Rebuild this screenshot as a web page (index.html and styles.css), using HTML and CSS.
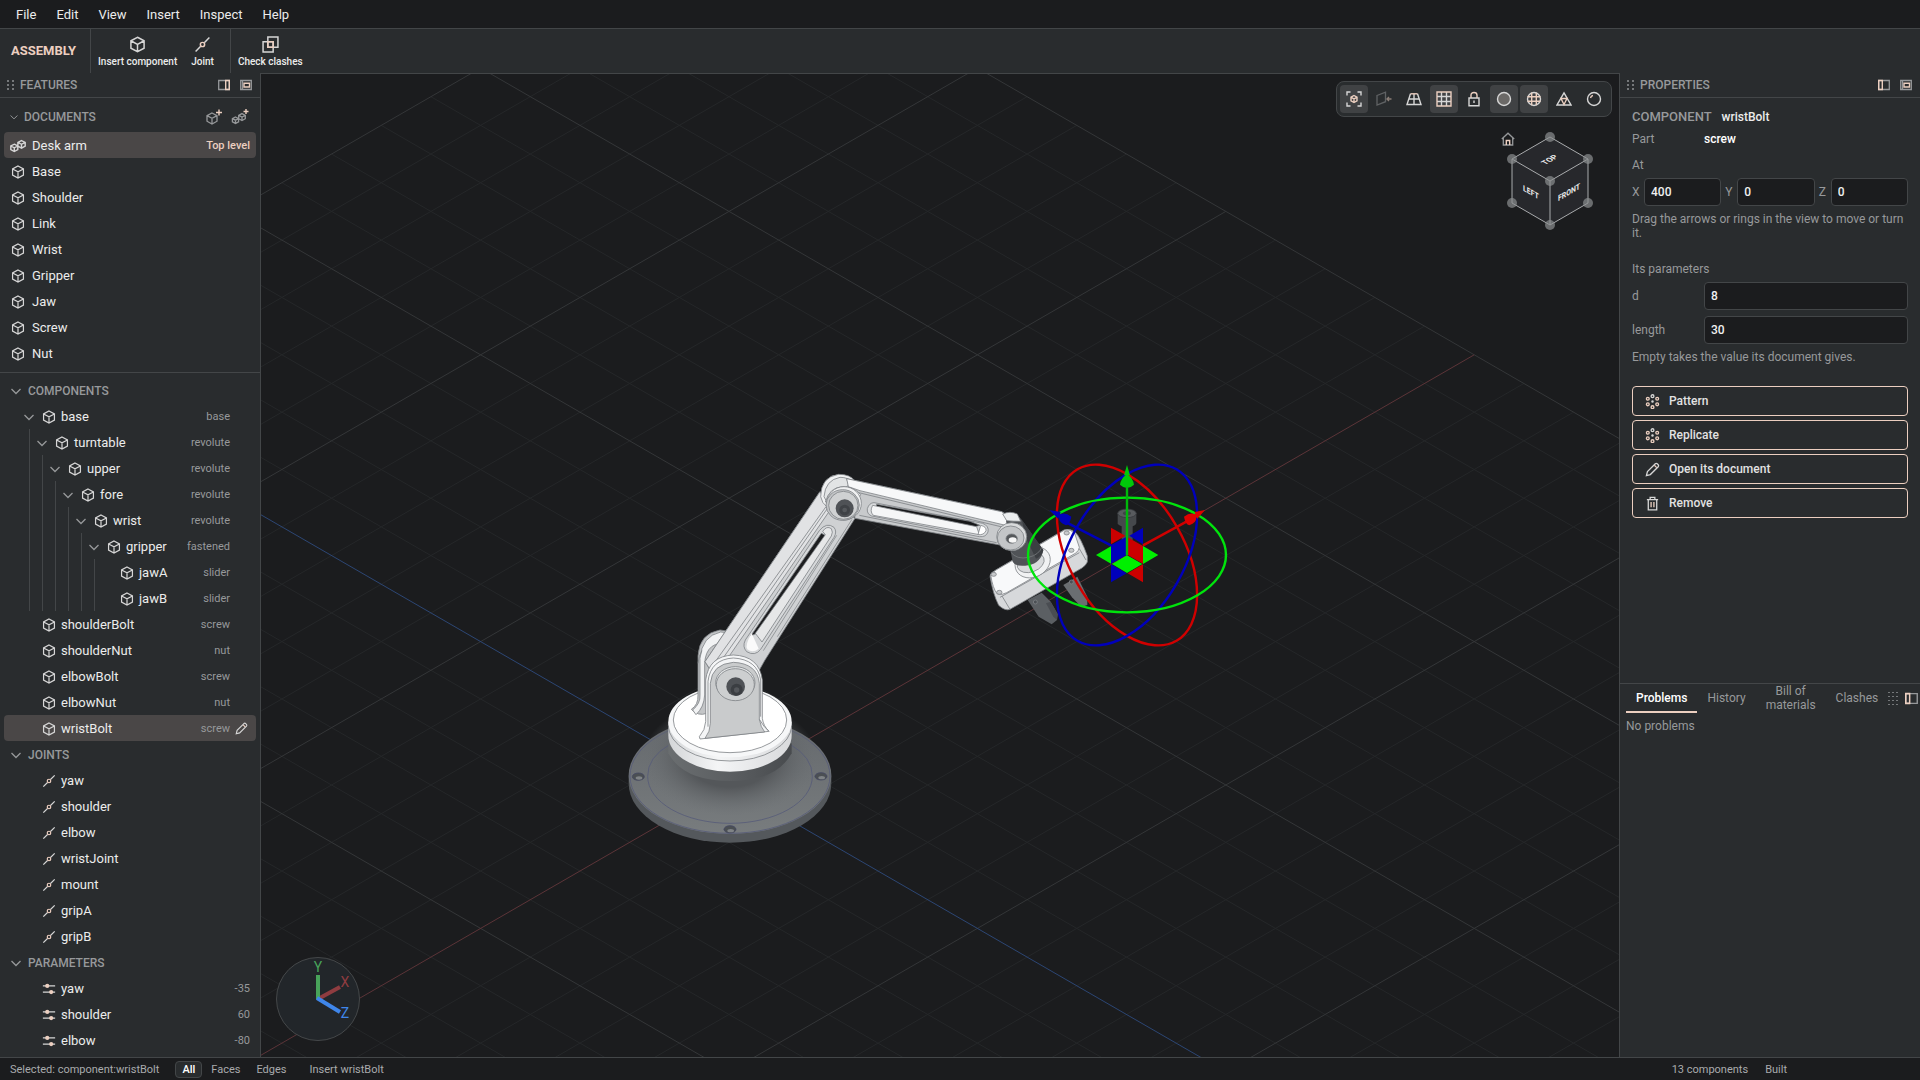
FILE: index.html
```html
<!DOCTYPE html>
<html lang="en">
<head>
<meta charset="utf-8">
<title>Desk arm – Assembly</title>
<link rel="stylesheet" href="styles.css">
</head>
<body>
<svg class="defs" aria-hidden="true">
  <symbol id="cube" viewBox="0 0 16 16"><path class="w" d="M8 1.2 14.2 4.5V11.5L8 14.8 1.8 11.5V4.5ZM1.8 4.5 8 7.8 14.2 4.5M8 7.8V14.8"/></symbol>
  <symbol id="cubes" viewBox="0 0 16 16"><path class="w" d="M4.3 6.2 7.8 8V11.6L4.3 13.5.8 11.6V8ZM.8 8 4.3 9.8 7.8 8M4.3 9.8V13.5M11.5 2.6 15.2 4.4V8.2L11.5 10.2 7.9 8.2V4.4ZM7.9 4.4 11.5 6.3 15.2 4.4M11.5 6.3V10.2"/></symbol>
  <symbol id="cube-add" viewBox="0 0 18 18"><path class="g" d="M7 5 12 7.6V13.2L7 16 2 13.2V7.6ZM2 7.6 7 10.3 12 7.6M7 10.3V16"/><path class="p" d="M14 1.5V7.5M11 4.5H17"/></symbol>
  <symbol id="cubes-add" viewBox="0 0 18 18"><path class="g" d="M4.5 9 7.6 10.6V13.8L4.5 15.4 1.4 13.8V10.6ZM1.4 10.6 4.5 12.2 7.6 10.6M4.5 12.2V15.4M11 5.6 14.3 7.3V10.7L11 12.5 7.7 10.7V7.3ZM7.7 7.3 11 9 14.3 7.3M11 9V12.5"/><path class="p" d="M15 1V6M12.500 3.500H17.500"/></symbol>
  <symbol id="joint" viewBox="0 0 16 16"><path class="w" d="M1.5 14.500 6.300 9.700M9.700 6.300 14.500 1.500"/><circle class="p" cx="8" cy="8" r="2"/></symbol>
  <symbol id="clash" viewBox="0 0 16 16"><path class="w" d="M5.500 1H15V10.500H5.500ZM1 5.500H10.500V15H1Z"/><path class="p" d="M5.500 5.500H10.500V10.500H5.500Z"/></symbol>
  <symbol id="chevron" viewBox="0 0 16 16"><path class="g" d="M3.500 6 8 10.500 12.500 6"/></symbol>
  <symbol id="grip" viewBox="0 0 8 12"><path class="dots" d="M0 1H2V3H0ZM5 1H7V3H5ZM0 5H2V7H0ZM5 5H7V7H5ZM0 9H2V11H0ZM5 9H7V11H5Z"/></symbol>
  <symbol id="grip-wide" viewBox="0 0 10 14"><path class="dots" d="M0 0H2V1H0ZM4 0H6V1H4ZM8 0H10V1H8ZM0 4H2V5H0ZM4 4H6V5H4ZM8 4H10V5H8ZM0 8H2V9H0ZM4 8H6V9H4ZM8 8H10V9H8ZM0 12H2V13H0ZM4 12H6V13H4ZM8 12H10V13H8Z"/></symbol>
  <symbol id="dock-right" viewBox="0 0 12 12"><path class="g" d="M.7 1.500H11.300V10.500H.7Z"/><path class="p" d="M7.700 1.500H11.300V10.500H7.700Z"/></symbol>
  <symbol id="dock-left" viewBox="0 0 12 12"><path class="g" d="M.7 1.500H11.300V10.500H.7Z"/><path class="p" d="M.7 1.500H4.300V10.500H.7Z"/></symbol>
  <symbol id="float" viewBox="0 0 12 12"><path class="g" d="M.7 1.500H11.300V10.500H.7ZM2.500 2V10"/><path class="p" d="M4 4.200H9.500V8H4Z"/></symbol>
  <symbol id="pencil" viewBox="0 0 16 16"><path class="w" d="M1.500 14.500 2.600 10.300 11 1.900Q12 1 13 1.900L14.100 3Q15 4 14.100 5L5.700 13.400Z"/><path class="p" d="M10 3.500 12.500 6"/></symbol>
  <symbol id="sliders" viewBox="0 0 16 16"><path class="w" d="M1 4.500H15M1 11.500H15"/><circle class="pf" cx="6" cy="4.500" r="2.400"/><circle class="pf" cx="10.500" cy="11.500" r="2.400"/></symbol>
  <symbol id="pattern" viewBox="0 0 16 16"><g class="p"><circle cx="3" cy="5" r="1.500"/><circle cx="13" cy="5" r="1.500"/><circle cx="3" cy="11" r="1.500"/><circle cx="13" cy="11" r="1.500"/><circle cx="8" cy="14" r="1.500"/></g><circle class="w" cx="8" cy="2.300" r="1.500"/><circle class="wf" cx="8" cy="8" r="1.300"/></symbol>
  <symbol id="trash" viewBox="0 0 16 16"><path class="w" d="M2 3.800H14M5.500 3.500V1.500H10.500V3.500M3.500 4V14.800H12.500V4"/><path class="p" d="M6.500 6.500V12M9.500 6.500V12"/></symbol>
  <symbol id="fit" viewBox="0 0 16 16"><path class="w" d="M1 4.500V1H4.500M11.500 1H15V4.500M15 11.500V15H11.500M4.500 15H1V11.500"/><path class="p" d="M8 4.500 11 6.200V9.800L8 11.500 5 9.800V6.200ZM5 6.200 8 8 11 6.200M8 8V11.500"/></symbol>
  <symbol id="section" viewBox="0 0 16 16"><path class="g" d="M1 4.500 9.500 1.200V10.700L1 14Z"/><path class="p" d="M15.500 8H11M13 6 11 8 13 10"/></symbol>
  <symbol id="perspective" viewBox="0 0 16 16"><path class="w" d="M4.500 2.800 1 13.500H15L11.500 2.800M8 3V13.500M3 8H13"/><path class="p" d="M4.500 2.800H11.500"/></symbol>
  <symbol id="grid" viewBox="0 0 16 16"><path class="w" d="M5.500 1V15M10.500 1V15M1 5.500H15M1 10.500H15"/><path class="p" d="M1 1H15V15H1Z"/></symbol>
  <symbol id="lock" viewBox="0 0 16 16"><path class="w" d="M3 7H13V14.800H3ZM8 9.500V12"/><path class="p" d="M5 7V4.200Q5 1.500 8 1.500T11 4.200V7"/></symbol>
  <symbol id="shaded" viewBox="0 0 16 16"><circle class="w shade" cx="8" cy="8" r="6.500"/></symbol>
  <symbol id="wire" viewBox="0 0 16 16"><circle class="w" cx="8" cy="8" r="6.500"/><path class="p" d="M1.500 5.700H14.500M1.500 10.300H14.500M5.700 1.800V14.200M10.300 1.800V14.200"/></symbol>
  <symbol id="mesh" viewBox="0 0 16 16"><path class="w" d="M8 1.800 15 14H1Z"/><path class="p" d="M5 7.500H11L8 13.500Z"/></symbol>
  <symbol id="ball" viewBox="0 0 16 16"><circle class="w" cx="8" cy="8" r="6.500"/><path class="p" d="M4.500 7Q5 4.800 7 4.500"/></symbol>
  <symbol id="home" viewBox="0 0 14 14"><path class="g" d="M.8 7 7 1.200 13.200 7M2.300 6V13H11.700V6"/><path class="p" d="M5.300 13V8.500H8.700V13"/></symbol>
</svg>

<nav class="menubar" aria-label="Main menu">
  <button>File</button><button>Edit</button><button>View</button><button>Insert</button><button>Inspect</button><button>Help</button>
</nav>

<header class="ribbon">
  <strong class="ribbon-mode">ASSEMBLY</strong>
  <div class="ribbon-group">
    <button><svg><use href="#cube"/></svg>Insert component</button>
    <button><svg><use href="#joint"/></svg>Joint</button>
  </div>
  <div class="ribbon-group">
    <button><svg><use href="#clash"/></svg>Check clashes</button>
  </div>
</header>

<main class="workspace">
  <aside class="features">
    <header class="panel-head">
      <svg class="grip"><use href="#grip"/></svg><h2>FEATURES</h2>
      <button aria-label="Dock right"><svg><use href="#dock-right"/></svg></button>
      <button aria-label="Float"><svg><use href="#float"/></svg></button>
    </header>
    <section class="documents">
      <header class="docs-head">
        <svg class="chev"><use href="#chevron"/></svg><h3>DOCUMENTS</h3>
        <button aria-label="New part"><svg><use href="#cube-add"/></svg></button>
        <button aria-label="New assembly"><svg><use href="#cubes-add"/></svg></button>
      </header>
      <ul>
        <li class="row selected"><svg class="wide"><use href="#cubes"/></svg><span>Desk arm</span><em>Top level</em></li>
        <li class="row"><svg><use href="#cube"/></svg><span>Base</span></li>
        <li class="row"><svg><use href="#cube"/></svg><span>Shoulder</span></li>
        <li class="row"><svg><use href="#cube"/></svg><span>Link</span></li>
        <li class="row"><svg><use href="#cube"/></svg><span>Wrist</span></li>
        <li class="row"><svg><use href="#cube"/></svg><span>Gripper</span></li>
        <li class="row"><svg><use href="#cube"/></svg><span>Jaw</span></li>
        <li class="row"><svg><use href="#cube"/></svg><span>Screw</span></li>
        <li class="row"><svg><use href="#cube"/></svg><span>Nut</span></li>
      </ul>
    </section>
    <section class="outline">
      <h3><svg class="chev"><use href="#chevron"/></svg>COMPONENTS</h3>
      <ul class="tree">
        <li><div class="row"><svg class="chev"><use href="#chevron"/></svg><svg><use href="#cube"/></svg><span>base</span><small>base</small></div>
          <ul><li><div class="row"><svg class="chev"><use href="#chevron"/></svg><svg><use href="#cube"/></svg><span>turntable</span><small>revolute</small></div>
            <ul><li><div class="row"><svg class="chev"><use href="#chevron"/></svg><svg><use href="#cube"/></svg><span>upper</span><small>revolute</small></div>
              <ul><li><div class="row"><svg class="chev"><use href="#chevron"/></svg><svg><use href="#cube"/></svg><span>fore</span><small>revolute</small></div>
                <ul><li><div class="row"><svg class="chev"><use href="#chevron"/></svg><svg><use href="#cube"/></svg><span>wrist</span><small>revolute</small></div>
                  <ul><li><div class="row"><svg class="chev"><use href="#chevron"/></svg><svg><use href="#cube"/></svg><span>gripper</span><small>fastened</small></div>
                    <ul>
                      <li><div class="row leaf"><svg><use href="#cube"/></svg><span>jawA</span><small>slider</small></div></li>
                      <li><div class="row leaf"><svg><use href="#cube"/></svg><span>jawB</span><small>slider</small></div></li>
                    </ul></li></ul></li></ul></li></ul></li></ul></li></ul>
        </li>
        <li><div class="row leaf"><svg><use href="#cube"/></svg><span>shoulderBolt</span><small>screw</small></div></li>
        <li><div class="row leaf"><svg><use href="#cube"/></svg><span>shoulderNut</span><small>nut</small></div></li>
        <li><div class="row leaf"><svg><use href="#cube"/></svg><span>elbowBolt</span><small>screw</small></div></li>
        <li><div class="row leaf"><svg><use href="#cube"/></svg><span>elbowNut</span><small>nut</small></div></li>
        <li><div class="row leaf selected"><svg><use href="#cube"/></svg><span>wristBolt</span><small>screw</small><button aria-label="Edit wristBolt"><svg><use href="#pencil"/></svg></button></div></li>
      </ul>
      <h3><svg class="chev"><use href="#chevron"/></svg>JOINTS</h3>
      <ul class="tree">
        <li><div class="row leaf"><svg><use href="#joint"/></svg><span>yaw</span></div></li>
        <li><div class="row leaf"><svg><use href="#joint"/></svg><span>shoulder</span></div></li>
        <li><div class="row leaf"><svg><use href="#joint"/></svg><span>elbow</span></div></li>
        <li><div class="row leaf"><svg><use href="#joint"/></svg><span>wristJoint</span></div></li>
        <li><div class="row leaf"><svg><use href="#joint"/></svg><span>mount</span></div></li>
        <li><div class="row leaf"><svg><use href="#joint"/></svg><span>gripA</span></div></li>
        <li><div class="row leaf"><svg><use href="#joint"/></svg><span>gripB</span></div></li>
      </ul>
      <h3><svg class="chev"><use href="#chevron"/></svg>PARAMETERS</h3>
      <ul class="tree values">
        <li><div class="row leaf"><svg><use href="#sliders"/></svg><span>yaw</span><small>-35</small></div></li>
        <li><div class="row leaf"><svg><use href="#sliders"/></svg><span>shoulder</span><small>60</small></div></li>
        <li><div class="row leaf"><svg><use href="#sliders"/></svg><span>elbow</span><small>-80</small></div></li>
      </ul>
    </section>
  </aside>

  <section class="viewport" aria-label="3D view">
    <svg class="scene" viewBox="261 74 1358 983" preserveAspectRatio="xMidYMid slice">
      <defs>
        <radialGradient id="shadow"><stop offset=".5" stop-color="#54575a"/><stop offset="1" stop-color="#6c7073" stop-opacity="0"/></radialGradient>
        <linearGradient id="flange" x1="0" y1="0" x2="0" y2="1"><stop offset="0" stop-color="#64686c"/><stop offset="1" stop-color="#787c7e"/></linearGradient>
        <linearGradient id="rim" x1="0" x2="1"><stop offset="0" stop-color="#d4d6d8"/><stop offset=".4" stop-color="#f4f5f6"/><stop offset="1" stop-color="#d9dadc"/></linearGradient>
        <linearGradient id="neck" x1="0" x2="1"><stop offset="0" stop-color="#6a6e70"/><stop offset=".5" stop-color="#5b5e61"/><stop offset="1" stop-color="#484b4e"/></linearGradient>
      </defs>
      <!-- ground grid: one unit is one minor cell, five to a major cell -->
      <g transform="matrix(49.68 -28.68 49.68 28.68 729 785)">
        <path class="minor" d="M-14-15V15M-13-15V15M-12-15V15M-11-15V15M-9-15V15M-8-15V15M-7-15V15M-6-15V15M-4-15V15M-3-15V15M-2-15V15M-1-15V15M1-15V15M2-15V15M3-15V15M4-15V15M6-15V15M7-15V15M8-15V15M9-15V15M11-15V15M12-15V15M13-15V15M14-15V15M-15-14H15M-15-13H15M-15-12H15M-15-11H15M-15-9H15M-15-8H15M-15-7H15M-15-6H15M-15-4H15M-15-3H15M-15-2H15M-15-1H15M-15 1H15M-15 2H15M-15 3H15M-15 4H15M-15 6H15M-15 7H15M-15 8H15M-15 9H15M-15 11H15M-15 12H15M-15 13H15M-15 14H15"/>
        <path class="major" d="M-15-15V15M-10-15V15M-5-15V15M5-15V15M10-15V15M15-15V15M-15-15H15M-15-10H15M-15-5H15M-15 5H15M-15 10H15M-15 15H15"/>
        <path class="axis-x" d="M-15 0H15"/><path class="axis-z" d="M0-15V15"/>
      </g>
      <!-- base, turntable and rear bracket cheek -->
      <g class="model" transform="translate(620 620) scale(.33333)">
        <path fill="#54585c" stroke="none" d="M26 468V490A304 178 0 0 0 634 490V468Z"/>
        <ellipse fill="url(#flange)" stroke="none" cx="330" cy="466" rx="304" ry="176"/>
        <ellipse class="dim" cx="330" cy="468" rx="300" ry="172"/>
        <ellipse fill="url(#shadow)" stroke="none" cx="330" cy="415" rx="262" ry="172"/>
        <path class="dim" d="M150 373Q82 412 83 469A247 141 0 0 0 577 469Q578 412 510 373"/>
        <path fill="url(#neck)" stroke="none" d="M145 370V400Q190 483 330 483T515 400V370Z"/>
        <g fill="#4b4f53" stroke="#444862"><ellipse cx="55" cy="470" rx="18" ry="11"/><ellipse cx="603" cy="469" rx="18" ry="11"/><ellipse cx="330" cy="628" rx="18" ry="11"/></g>
        <g fill="#7f8386" stroke="none"><ellipse cx="57" cy="474" rx="10" ry="5"/><ellipse cx="605" cy="473" rx="10" ry="5"/><ellipse cx="332" cy="632" rx="10" ry="5"/></g>
        <path fill="url(#rim)" stroke="none" d="M145 305V347A185 108 0 0 0 515 347V305Z"/>
        <path d="M145 316A185 107 0 0 0 515 316"/>
        <ellipse fill="#f6f7f8" stroke="none" cx="330" cy="305" rx="185" ry="107"/>
        <ellipse fill="#fff" cx="330" cy="300" rx="170" ry="98"/>
        <path fill="#c3c5c7" d="M214 268Q235 255 234 225V108Q238 40 300 30Q340 32 350 60L330 150 260 280Q235 290 214 268Z"/>
        <path fill="#f2f3f4" d="M240 115Q246 48 302 36Q330 36 338 60L320 90Q300 60 275 80 256 95 254 130V225Q252 262 228 284L218 270Q242 250 240 225Z"/>
        <path d="M234 130Q236 108 246 92"/>
      </g>
      <!-- upper link -->
      <g class="model" transform="translate(700 460) scale(.33333)">
        <path fill="#cfd1d3" d="M360 95 15 605 60 680H150L195 600 465 175Z"/>
        <path fill="#e1e2e4" d="M360 95 15 605 45 650 392 148Z"/>
        <path d="M386 140 50 622M378 140 38 616" />
        <path fill="#d6d8da" d="M358 212Q380 185 402 202 412 215 402 232L182 568Q165 590 140 575 126 560 136 540Z"/>
        <path fill="#1d1e20" d="M364 220 376 226 170 520 152 528Z"/>
        <path fill="#e6e7e8" d="M368 214Q380 196 394 206 400 216 394 228L186 546 166 520 376 224Z"/>
        <path fill="#fafafa" stroke="none" d="M155 520 176 566Q158 580 142 568 134 556 155 520Z"/>
        <path d="M410 226 190 572M456 178 232 530" stroke="#888b8e"/>
        <path fill="#f0f1f2" d="M362 110Q362 52 415 43 450 42 466 64L440 100 380 140Q366 130 362 110Z"/>
        <path fill="#e2e4e5" d="M372 110Q376 60 420 52 445 52 455 66L430 90 385 134Z"/>
        <!-- forearm -->
        <path fill="#c8cacc" d="M440 56 905 155 965 190 900 255 465 175 450 90Z"/>
        <path fill="#f7f8f9" d="M440 56 905 155 960 192 925 198 480 92 445 80Z"/>
        <path d="M476 98 915 203M478 166 890 248"/>
        <path fill="#d9dbdd" d="M522 128 848 190Q868 198 864 216 858 232 838 230L515 168Q500 162 502 146 508 128 522 128Z"/>
        <path fill="#161719" d="M530 133 810 184 840 196 825 200 528 142Z"/>
        <path fill="#f5f6f7" d="M518 136 830 200 838 224 520 166Q508 154 518 136Z"/>
        <path fill="#fff" d="M842 196Q860 200 858 212 852 226 834 224Z"/>
        <path fill="#f3f4f5" d="M376 126Q388 82 428 80 462 80 482 104L460 140Z"/>
        <ellipse fill="#f0f1f2" cx="432" cy="130" rx="52" ry="50"/>
        <ellipse fill="#c3c5c7" cx="428" cy="135" rx="50" ry="46"/>
        <ellipse fill="#cfd1d2" cx="430" cy="136" rx="44" ry="42"/>
        <circle fill="#4f5256" stroke="none" cx="434" cy="145" r="27"/><circle fill="#3f4246" stroke="none" cx="434" cy="150" r="16"/><circle fill="#55585c" stroke="none" cx="434" cy="150" r="7"/>
      </g>
      <!-- front bracket cheek -->
      <g class="model" transform="translate(620 620) scale(.33333)">
        <path fill="#f4f5f6" d="M238 350Q256 330 257 305V180Q266 108 340 105 418 108 427 180V295Q430 318 447 334L240 357Z"/>
        <path fill="#c9cbcc" d="M255 355Q271 335 271 310V190Q276 132 340 127 412 130 418 190V298Q422 322 434 336Z"/>
        <path d="M264 320V184Q272 118 340 114 412 118 422 180V290M418 298Q432 322 447 334"/>
        <ellipse fill="#e4e6e7" cx="346" cy="188" rx="59" ry="48"/>
        <ellipse fill="#cdcfd0" cx="346" cy="194" rx="57" ry="48"/>
        <circle fill="#4f5256" stroke="none" cx="347" cy="200" r="28"/><circle fill="#3b3e42" stroke="none" cx="350" cy="209" r="18"/><circle fill="#54575b" stroke="none" cx="350" cy="210" r="8"/>
      </g>
      <!-- wrist, gripper and jaws -->
      <g class="model" transform="translate(960 450) scale(.33333)">
        <path fill="#5b5f63" stroke="none" d="M203 450 245 428 272 455 293 492 291 510 275 523 236 500Z"/>
        <path fill="#6a6e71" stroke="none" d="M310 405 352 380 382 440V465L364 471 336 442Z"/>
        <path fill="#4a4d52" stroke="none" d="M258 460 272 455 293 492 291 510 280 500Z"/>
        <circle cx="226" cy="456" r="6" fill="#4c5055"/><circle cx="334" cy="396" r="6" fill="#4c5055"/>
        <path fill="#d7d9db" d="M90 378Q92 368 104 362L312 240Q330 234 345 246 362 262 382 318V336Q378 346 366 354L150 478Q136 484 116 466 98 430 90 378Z"/>
        <path fill="#f8f9fa" d="M92 374 108 360 314 240Q332 236 344 250L358 292Q358 302 346 310L140 428Q126 436 112 432 98 416 92 374Z"/>
        <path d="M126 438 150 478M358 296 378 330M120 442 358 308"/>
        <g fill="#c7c9cb"><ellipse cx="101" cy="373" rx="8" ry="6"/><ellipse cx="118" cy="427" rx="8" ry="6"/><ellipse cx="320" cy="249" rx="8" ry="6"/><ellipse cx="334" cy="301" rx="8" ry="6"/></g>
        <ellipse fill="#f1f2f3" cx="218" cy="337" rx="55" ry="44" transform="rotate(-28 218 337)"/>
        <ellipse fill="#d9dbdd" cx="212" cy="338" rx="42" ry="28" transform="rotate(-20 212 338)"/>
        <path fill="#505357" stroke="none" d="M135 190Q168 182 184 208L250 300Q244 338 205 346 166 352 158 335L150 295Z"/>
        <path fill="#3b3e42" stroke="none" d="M186 210 250 300Q246 318 228 326L196 260Z"/>
        <path stroke="#777b7e" d="M152 306Q170 330 206 322 238 314 246 290"/>
        <path fill="#eceeef" d="M128 192Q150 182 172 192L182 214Q160 214 140 212Z"/>
        <ellipse fill="#d9dbdc" cx="155" cy="260" rx="45" ry="42"/>
        <ellipse fill="#c3c5c7" cx="152" cy="264" rx="40" ry="36"/>
        <ellipse fill="#55585b" cx="155" cy="266" rx="17" ry="14"/><ellipse fill="#f7f7f7" stroke="none" cx="158" cy="270" rx="12" ry="8"/>
        <!-- wristBolt -->
        <path fill="#46494c" stroke="none" d="M473 190V222Q480 228 485 229V270H518V229Q528 226 529 220V190Z"/>
        <ellipse fill="#585b5e" stroke="#33363a" cx="501" cy="190" rx="28" ry="13"/><ellipse fill="#414447" stroke="none" cx="501" cy="190" rx="12" ry="6"/>
      </g>
      <!-- transform gizmo -->
      <g class="gizmo" transform="translate(960 450) scale(.33333)">
        <ellipse stroke="#d00000" cx="501" cy="315" rx="297" ry="172" transform="rotate(60 501 315)"/>
        <ellipse stroke="#00b" cx="501" cy="315" rx="297" ry="172" transform="rotate(-60 501 315)"/>
        <ellipse stroke="#00e40c" cx="501" cy="315" rx="297" ry="172"/>
        <path stroke="#00b" d="M453 286 320 218"/><path stroke="#d00000" d="M549 286 685 212"/>
        <g stroke="none">
          <path fill="#00f000" d="M408 315 453 289V341ZM595 315 549 288V342ZM456 342 501 316 547 342 501 369Z"/>
          <path fill="#c00" d="M453 233 496 257 453 283ZM503 262 549 288V341L503 315ZM503 370 549 343V397Z"/>
          <path fill="#00b" d="M549 233 508 257 549 283ZM453 285 500 260V315L453 341ZM453 343 500 370 453 397Z"/>
          <path fill="#00c80a" d="M501 45 510 76H505Q519 86 522 104 501 124 480 104 483 86 497 76H492Z"/>
          <path fill="#e00000" d="M735 180 712 206 709 201Q710 218 688 226 676 222 672 200 690 186 706 193L704 186Z"/>
          <path fill="#00b" d="M268 180 294 206 297 201Q296 218 318 226 330 222 334 200 316 186 300 193L302 186Z"/>
        </g>
        <path stroke="#00b80a" d="M501 315V110"/>
      </g>
    </svg>

    <div class="view-tools" role="toolbar" aria-label="View">
      <button class="on" aria-label="Fit"><svg><use href="#fit"/></svg></button>
      <button disabled aria-label="Section"><svg><use href="#section"/></svg></button>
      <button aria-label="Perspective"><svg><use href="#perspective"/></svg></button>
      <button class="on" aria-label="Grid"><svg><use href="#grid"/></svg></button>
      <button aria-label="Lock"><svg><use href="#lock"/></svg></button>
      <button class="on" aria-label="Shaded"><svg><use href="#shaded"/></svg></button>
      <button class="on" aria-label="Edges"><svg><use href="#wire"/></svg></button>
      <button aria-label="Mesh"><svg><use href="#mesh"/></svg></button>
      <button aria-label="Material"><svg><use href="#ball"/></svg></button>
    </div>
    <button class="home" aria-label="Home view"><svg><use href="#home"/></svg></button>
    <svg class="view-cube" viewBox="0 0 90 102">
      <path class="face" d="M45 7 83 29V73L45 95 7 73V29Z"/>
      <path class="edge" d="M45 7 83 29V73L45 95 7 73V29ZM7 29 45 51 83 29M45 51V95"/>
      <g class="knob"><circle cx="45" cy="7" r="5"/><circle cx="7" cy="29" r="5"/><circle cx="83" cy="29" r="5"/><circle cx="45" cy="51" r="5"/><circle cx="7" cy="73" r="5"/><circle cx="83" cy="73" r="5"/><circle cx="45" cy="95" r="5"/></g>
      <text transform="matrix(.866 -.5 .866 .5 47 31)">TOP</text>
      <text transform="matrix(.866 .5 0 1 26 65)">LEFT</text>
      <text transform="matrix(.866 -.5 0 1 64 65)">FRONT</text>
    </svg>
    <svg class="triad" viewBox="0 0 84 84">
      <circle cx="42" cy="42" r="41.500"/>
      <path stroke="#8f3c40" d="M42 42 64 30"/><path stroke="#48a35a" d="M42 42V18"/><path stroke="#3f86ea" d="M41 41 64 55"/>
      <text x="42" y="15" fill="#48a35a">Y</text><text x="69" y="30" fill="#8f3c40">X</text><text x="69" y="61" fill="#3f86ea">Z</text>
    </svg>
  </section>

  <aside class="side">
    <section class="properties">
      <header class="panel-head">
        <svg class="grip"><use href="#grip"/></svg><h2>PROPERTIES</h2>
        <button aria-label="Dock left"><svg><use href="#dock-left"/></svg></button>
        <button aria-label="Float"><svg><use href="#float"/></svg></button>
      </header>
      <form class="props">
        <p class="kind"><b>COMPONENT</b><span>wristBolt</span></p>
        <p class="pair"><span>Part</span><output>screw</output></p>
        <p class="caption">At</p>
        <div class="xyz">
          <label for="px">X</label><input id="px" value="400">
          <label for="py">Y</label><input id="py" value="0">
          <label for="pz">Z</label><input id="pz" value="0">
        </div>
        <p class="hint">Drag the arrows or rings in the view to move or turn it.</p>
        <p class="caption params">Its parameters</p>
        <div class="field"><label for="pd">d</label><input id="pd" value="8"></div>
        <div class="field"><label for="pl">length</label><input id="pl" value="30"></div>
        <p class="hint">Empty takes the value its document gives.</p>
        <div class="actions">
          <button type="button"><svg><use href="#pattern"/></svg>Pattern</button>
          <button type="button"><svg><use href="#pattern"/></svg>Replicate</button>
          <button type="button"><svg><use href="#pencil"/></svg>Open its document</button>
          <button type="button"><svg><use href="#trash"/></svg>Remove</button>
        </div>
      </form>
    </section>
    <section class="reports">
      <div class="tabs">
        <button class="on">Problems</button><button>History</button><button class="two">Bill of materials</button><button>Clashes</button>
        <svg class="grip-wide"><use href="#grip-wide"/></svg>
        <button class="dock" aria-label="Dock left"><svg><use href="#dock-left"/></svg></button>
      </div>
      <p>No problems</p>
    </section>
  </aside>
</main>

<footer class="status">
  <span class="sel">Selected: component:wristBolt</span>
  <button class="on">All</button><button>Faces</button><button>Edges</button>
  <span class="task">Insert wristBolt</span>
  <span class="count">13 components</span><span class="built">Built</span>
</footer>
</body>
</html>
```
FILE: styles.css
```css
:root {
  --ink: #1b1c1e;
  --panel: #292c2e;
  --line: #434648;
  --text: #ececec;
  --muted: #97999b;
  --peach: #eccfc0;
  --select: #4a4747;
}
* { box-sizing: border-box; }
body {
  margin: 0;
  height: 100vh;
  display: flex;
  flex-direction: column;
  overflow: hidden;
  background: var(--panel);
  color: var(--text);
  font: 400 13px/16px Roboto, sans-serif;
}
button { font: inherit; color: inherit; background: none; border: 0; padding: 0; margin: 0; }
h2, h3, p, ul { margin: 0; padding: 0; list-style: none; }
h2, h3 { font-size: 12px; font-weight: 500; color: var(--muted); }
svg { display: block; flex: none; fill: none; }
.defs { position: absolute; width: 0; height: 0; }

.w { stroke: #d6d6d6; stroke-width: 1.4; fill: none; }
.g { stroke: #96989a; stroke-width: 1.3; fill: none; }
.p { stroke: var(--peach); stroke-width: 1.4; fill: none; }
.pf { fill: var(--peach); }
.wf { fill: #d6d6d6; }
.dots { fill: #75787a; }
.shade { fill: #6b6967; }

/* menu and ribbon */
.menubar { display: flex; height: 29px; padding-left: 6px; background: var(--ink); border-bottom: 1px solid var(--line); }
.menubar button { padding: 1px 10px 0; }
.ribbon { display: flex; height: 44px; }
.ribbon-mode { display: flex; align-items: center; width: 91px; padding-left: 11px; border-right: 1px solid var(--line); color: var(--peach); font-weight: 700; }
.ribbon-group { display: flex; padding-right: 9px; border-right: 1px solid var(--line); }
.ribbon-group:last-child { border: 0; }
.ribbon-group button { display: flex; flex-direction: column; align-items: center; gap: 2px; min-width: 36px; padding: 7px 7px 0; font-size: 10px; font-weight: 500; line-height: 14px; }
.ribbon-group svg { width: 17px; height: 17px; }

.workspace { flex: 1; min-height: 0; display: flex; }

/* panels */
.panel-head { display: flex; align-items: center; height: 25px; padding: 0 8px 0 7px; border-bottom: 1px solid var(--line); }
.panel-head h2 { flex: 1; }
.panel-head .grip { width: 8px; height: 12px; margin-right: 5px; }
.panel-head button { margin-left: 10px; }
.panel-head button svg { width: 12px; height: 12px; }
.chev { width: 16px; height: 16px; }

.features { width: 261px; flex: none; display: flex; flex-direction: column; border-right: 1px solid var(--line); }
.documents { padding-bottom: 6px; border-bottom: 1px solid var(--line); }
.docs-head { display: flex; align-items: center; height: 34px; padding: 3px 11px 0 8px; }
.docs-head .chev { width: 12px; height: 12px; margin-right: 4px; }
.docs-head h3 { flex: 1; }
.docs-head button { margin-left: 8px; }
.docs-head button svg { width: 18px; height: 18px; }

.row { display: flex; align-items: center; height: 26px; margin: 0 4px; padding: 1px 6px 0 7px; border-radius: 4px; }
.row > svg:not(.chev) { width: 14px; height: 14px; margin-right: 7px; }
.documents .row .wide { width: 16px; height: 16px; margin: 0 6px 0 -1px; }
.row > span { flex: 1; }
.row em { font-style: normal; font-size: 11px; font-weight: 500; color: var(--peach); }
.row small { font-size: 11px; color: var(--muted); }
.row.selected { background: var(--select); }

.outline { flex: 1; min-height: 0; overflow: hidden; padding-top: 4px; }
.outline h3 { display: flex; align-items: center; gap: 4px; height: 26px; padding: 1px 0 0 8px; }
.tree { padding-left: 17px; }
.tree ul { margin-left: 12px; border-left: 1px solid var(--line); }
.tree .row { margin-left: 0; padding: 1px 26px 0 4px; }
.tree .row .chev { margin-right: 5px; }
.tree .leaf { padding-left: 25px; }
.tree > li > .row { margin-left: -13px; padding-left: 17px; }
.tree > li > .leaf { padding-left: 38px; }
.tree .row > svg:not(.chev) { margin-right: 5px; }
.tree > li > .selected { padding-right: 8px; }
.row button { margin-left: 5px; }
.row button svg { width: 13px; height: 13px; }
.tree.values .row { padding-right: 6px; }

/* 3D view */
.viewport { flex: 1; position: relative; min-width: 0; overflow: hidden; background: var(--ink); border-top: 1px solid var(--line); }
.scene { position: absolute; inset: 0; width: 100%; height: 100%; }
.scene g path, .scene g ellipse, .scene g circle { vector-effect: non-scaling-stroke; }
.minor { stroke: #252729; }
.major { stroke: #343638; }
.axis-x { stroke: #5c3438; }
.axis-z { stroke: #2c4674; }
.model { stroke: #7e8185; stroke-width: .8; }
.model .dim { stroke: #565b78; }
.gizmo { stroke-width: 2.4; }
.view-tools { position: absolute; top: 7px; right: 7px; display: flex; gap: 2px; padding: 3px; background: var(--panel); border: 1px solid var(--line); border-radius: 8px; }
.view-tools button { display: grid; place-items: center; width: 28px; height: 28px; border-radius: 4px; }
.view-tools .on { background: #404244; }
.view-tools button:disabled { opacity: .5; }
.view-tools svg { width: 16px; height: 16px; }
.home { position: absolute; top: 58px; right: 104px; }
.home svg { width: 14px; height: 14px; }
.view-cube { position: absolute; top: 56px; right: 24px; width: 90px; height: 102px; }
.face { fill: #27282c; }
.edge { stroke: #a9abad; stroke-width: 1; }
.knob { fill: #8c8e90; fill-opacity: .7; }
.view-cube text { fill: #ececec; font-size: 8px; font-weight: 700; text-anchor: middle; }
.triad { position: absolute; left: 15px; bottom: 16px; width: 84px; height: 84px; }
.triad circle { fill: #22262a; stroke: #45484a; }
.triad path { stroke-width: 4; }
.triad text { font-size: 14px; text-anchor: middle; }

/* right side */
.side { width: 301px; flex: none; display: flex; flex-direction: column; border-left: 1px solid var(--line); color: var(--muted); font-size: 12px; line-height: 14px; }
.properties { flex: 1; min-height: 0; }
.props { padding: 11px 12px; }
.kind { display: flex; gap: 10px; line-height: 16px; }
.kind b { font-size: 13px; font-weight: 500; }
.kind span { color: var(--text); font-weight: 500; }
.pair { display: grid; grid-template-columns: 72px 1fr; padding-top: 6px; line-height: 16px; }
.pair output { color: #fff; font-weight: 500; }
.caption { padding-top: 11px; line-height: 14px; }
.xyz { display: grid; grid-template-columns: 8px 1fr 8px 1fr 8px 1fr; gap: 4px; align-items: center; padding: 6px 0; }
.xyz label { white-space: nowrap; }
input { width: 100%; min-width: 0; height: 28px; margin: 0; padding: 0 6px; background: var(--ink); border: 1px solid var(--line); border-radius: 4px; color: #f0f0f0; font: 500 12px Roboto, sans-serif; }
.caption.params { padding: 22px 0 6px; }
.field { display: grid; grid-template-columns: 72px 1fr; align-items: center; padding-bottom: 6px; }
.actions { display: grid; gap: 4px; padding-top: 22px; }
.actions button { display: flex; align-items: center; gap: 9px; height: 30px; padding: 0 12px; border: 1px solid var(--peach); border-radius: 4px; color: #e2e2e2; font-weight: 500; }
.actions svg { width: 15px; height: 15px; }
.reports { height: 374px; border-top: 1px solid var(--line); }
.tabs { display: flex; align-items: center; height: 29px; padding-left: 6px; }
.tabs button { flex: none; height: 29px; padding: 0 10px 2px; line-height: 14px; }
.tabs .on { padding-bottom: 0; color: #fff; font-weight: 500; border-bottom: 2px solid var(--peach); }
.tabs .two { width: 70px; padding: 0 8px 2px; }
.grip-wide { width: 10px; height: 14px; }
.tabs .dock { padding: 0; margin-left: 7px; }
.dock svg { width: 13px; height: 13px; }
.reports p { padding: 6px; }

/* status bar */
.status { display: flex; align-items: center; height: 23px; padding: 1px 0 0 10px; background: var(--ink); border-top: 1px solid var(--line); color: #a9abad; font-size: 11px; line-height: 14px; }
.status button { height: 17px; margin-right: 2px; padding: 0 6px; border: 1px solid transparent; border-radius: 4px; }
.status .sel { margin-right: 16px; }
.status .on { background: var(--panel); border-color: var(--line); color: #fff; font-weight: 500; }
.task { flex: 1; margin-left: 14px; }
.built { margin: 0 133px 0 17px; }
```
